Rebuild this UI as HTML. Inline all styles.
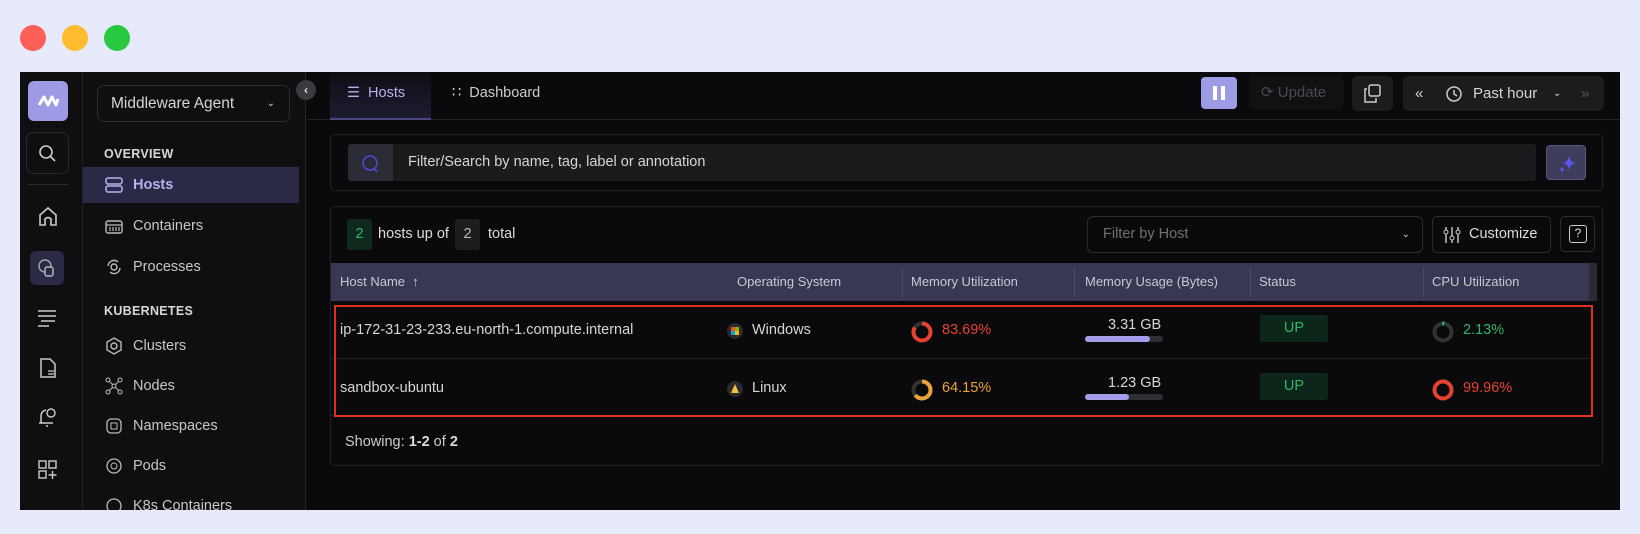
<!DOCTYPE html>
<html><head><meta charset="utf-8"><style>
*{box-sizing:border-box;margin:0;padding:0}
body{width:1640px;height:534px;background:#e6eafb;font-family:"Liberation Sans",sans-serif;position:relative;overflow:hidden;color:#ddd}
.a{position:absolute}
.dot{position:absolute;top:25px;width:26px;height:26px;border-radius:50%}
.app{position:absolute;left:20px;top:72px;width:1600px;height:438px;background:#0a0a0c;overflow:hidden}
.rail{left:0;top:0;width:63px;height:438px;background:#0f0f12;border-right:1px solid #222}
.side{left:63px;top:0;width:223px;height:438px;background:#0f0f11;border-right:1px solid #262628}
.sh{font-size:12.5px;font-weight:bold;color:#d8d8dc;letter-spacing:.3px}
.si{font-size:14.5px;color:#c8c8cc;display:flex;align-items:center;gap:10px}
.ic{width:18px;height:18px}
.cell{position:absolute;font-size:14.5px;color:#d6d6da}
.th{position:absolute;top:0;height:38px;line-height:38px;font-size:13px;color:#c8c8d4}
</style></head><body>
<div class="dot" style="left:20px;background:#fe5f57"></div>
<div class="dot" style="left:62px;background:#febc2e"></div>
<div class="dot" style="left:104px;background:#28c840"></div>
<div class="app">
 <div class="a rail">
  <div class="a" style="left:8px;top:9px;width:40px;height:40px;border-radius:6px;background:#9d9ae6"><svg width="40" height="40"><path d="M11 24 L16 16 L20 24 L24 16 L28 24 L30 18" stroke="#fff" stroke-width="3" fill="none" stroke-linejoin="round"/></svg></div>
  <div class="a" style="left:6px;top:60px;width:43px;height:42px;border:1px solid #2a2a2e;border-radius:7px"><svg width="42" height="40"><circle cx="19" cy="19" r="6" stroke="#ccc" stroke-width="1.6" fill="none"/><path d="M23.5 23.5 L28 28" stroke="#ccc" stroke-width="1.6"/></svg></div>
  <div class="a" style="left:8px;top:112px;width:40px;height:1px;background:#2a2a2e"></div>
  <svg class="a" style="left:15px;top:132px" width="26" height="26"><path d="M5 21 V11 L13 4 L21 11 V21 H16 V15 Q13 12 10 15 V21 Z" stroke="#ccc" stroke-width="1.6" fill="none"/></svg>
  <div class="a" style="left:10px;top:179px;width:34px;height:34px;border-radius:6px;background:#2a2946"></div>
  <svg class="a" style="left:15px;top:184px" width="24" height="24"><circle cx="10" cy="10" r="6" stroke="#aaa" stroke-width="1.4" fill="none"/><rect x="10" y="11" width="8" height="9" rx="2" stroke="#bbb" stroke-width="1.4" fill="#2a2946"/></svg>
  <svg class="a" style="left:15px;top:234px" width="24" height="24"><path d="M3 5H21M3 10H21M6 15H20M3 20H14" stroke="#ccc" stroke-width="1.5"/></svg>
  <svg class="a" style="left:16px;top:284px" width="24" height="24"><path d="M5 3H14L19 8V21H5Z" stroke="#ccc" stroke-width="1.5" fill="none"/><path d="M12 15H18M12 18H18" stroke="#ccc" stroke-width="1.3"/></svg>
  <svg class="a" style="left:15px;top:333px" width="24" height="24"><path d="M6 18V11Q6 6 11 5M4 18H18" stroke="#ccc" stroke-width="1.5" fill="none"/><circle cx="16" cy="8" r="4" stroke="#ccc" stroke-width="1.4" fill="none"/><path d="M11 21H13" stroke="#ccc" stroke-width="1.5"/></svg>
  <svg class="a" style="left:16px;top:386px" width="24" height="24"><rect x="3" y="3" width="7" height="7" stroke="#ccc" stroke-width="1.4" fill="none"/><rect x="13" y="3" width="7" height="7" stroke="#ccc" stroke-width="1.4" fill="none"/><rect x="3" y="13" width="7" height="7" stroke="#ccc" stroke-width="1.4" fill="none"/><path d="M16.5 13V21M12.5 17H20.5" stroke="#ccc" stroke-width="1.4"/></svg>
 </div>
 <div class="a side">
  <div class="a" style="left:14px;top:13px;width:193px;height:37px;border:1px solid #2c2c30;border-radius:7px;font-size:15.5px;color:#d6d6da;line-height:35px;padding-left:13px">Middleware Agent<span style="position:absolute;right:14px;font-size:10px">&#8964;</span></div>
  <div class="a sh" style="left:21px;top:75px">OVERVIEW</div>
  <div class="a" style="left:0;top:95px;width:216px;height:36px;background:#2a2946"></div>
  <div class="a si" style="left:22px;top:104px;color:#b7b2f0;font-weight:bold"><svg class="ic"><rect x="1" y="2" width="16" height="6" rx="2" stroke="#b7b2f0" stroke-width="1.5" fill="none"/><rect x="1" y="10" width="16" height="6" rx="2" stroke="#b7b2f0" stroke-width="1.5" fill="none"/></svg>Hosts</div>
  <div class="a si" style="left:22px;top:145px"><svg class="ic"><rect x="1" y="4" width="16" height="12" rx="2" stroke="#bbb" stroke-width="1.4" fill="none"/><path d="M1 8H17M5 10V14M8 10V14M11 10V14M14 10V14" stroke="#bbb" stroke-width="1.2"/></svg>Containers</div>
  <div class="a si" style="left:22px;top:186px"><svg class="ic"><circle cx="9" cy="9" r="3" stroke="#bbb" stroke-width="1.4" fill="none"/><path d="M3 8A6 6 0 0 1 13 4M15 10A6 6 0 0 1 5 14" stroke="#bbb" stroke-width="1.4" fill="none"/></svg>Processes</div>
  <div class="a sh" style="left:21px;top:232px">KUBERNETES</div>
  <div class="a si" style="left:22px;top:265px"><svg class="ic"><path d="M9 1L16 5V13L9 17L2 13V5Z" stroke="#bbb" stroke-width="1.4" fill="none"/><circle cx="9" cy="9" r="3" stroke="#bbb" stroke-width="1.4" fill="none"/></svg>Clusters</div>
  <div class="a si" style="left:22px;top:305px"><svg class="ic"><circle cx="3" cy="3" r="2" stroke="#bbb" fill="none"/><circle cx="15" cy="3" r="2" stroke="#bbb" fill="none"/><circle cx="3" cy="15" r="2" stroke="#bbb" fill="none"/><circle cx="15" cy="15" r="2" stroke="#bbb" fill="none"/><circle cx="9" cy="9" r="2" stroke="#bbb" fill="none"/><path d="M4 4L8 8M14 4L10 8M4 14L8 10M14 14L10 10" stroke="#bbb"/></svg>Nodes</div>
  <div class="a si" style="left:22px;top:345px"><svg class="ic"><rect x="2" y="2" width="14" height="14" rx="4" stroke="#bbb" stroke-width="1.3" fill="none"/><rect x="6" y="6" width="6" height="6" stroke="#bbb" fill="none"/></svg>Namespaces</div>
  <div class="a si" style="left:22px;top:385px"><svg class="ic"><circle cx="9" cy="9" r="7" stroke="#bbb" stroke-width="1.3" fill="none"/><circle cx="9" cy="9" r="3" stroke="#bbb" fill="none"/></svg>Pods</div>
  <div class="a si" style="left:22px;top:425px"><svg class="ic"><circle cx="9" cy="9" r="7" stroke="#bbb" stroke-width="1.3" fill="none"/></svg>K8s Containers</div>
 </div>
 <div class="a" style="left:276px;top:8px;width:20px;height:20px;border-radius:50%;background:#3a3a40;color:#ddd;font-size:12px;text-align:center;line-height:20px;font-weight:bold">&#8249;</div>
 <div class="a" style="left:287px;top:47px;width:1313px;height:1px;background:#232326"></div>
 <div class="a" style="left:310px;top:0;width:101px;height:48px;background:linear-gradient(#0e0e14,#1d1c30);border-bottom:2px solid #4a4780"></div>
 <div class="a" style="left:327px;top:13px;font-size:14.5px;color:#b7b2f0">&#9776;&nbsp; Hosts</div>
 <div class="a" style="left:432px;top:13px;font-size:14.5px;color:#ccc">&#8759;&nbsp; Dashboard</div>
 <div class="a" style="left:1181px;top:5px;width:36px;height:32px;border-radius:4px;background:#9d9ae6"><div class="a" style="left:12px;top:9px;width:4px;height:14px;background:#fff"></div><div class="a" style="left:20px;top:9px;width:4px;height:14px;background:#fff"></div></div>
 <div class="a" style="left:1229px;top:4px;width:95px;height:34px;border-radius:6px;background:#111114;font-size:15px;color:#4a4a50;line-height:34px;padding-left:12px">&#10227; Update</div>
 <div class="a" style="left:1332px;top:4px;width:41px;height:35px;border-radius:6px;background:#1c1c1f"><svg width="41" height="35"><rect x="17" y="9" width="11" height="11" rx="2" stroke="#ccc" stroke-width="1.5" fill="none"/><path d="M15 13H13V26H24V22" stroke="#ccc" stroke-width="1.5" fill="none"/></svg></div>
 <div class="a" style="left:1383px;top:4px;width:201px;height:35px;border-radius:6px;background:#1c1c1f;font-size:15px;color:#d6d6da;line-height:35px"><span class="a" style="left:12px">&#171;</span><svg class="a" style="left:42px;top:9px" width="18" height="18"><circle cx="9" cy="9" r="7" stroke="#ccc" stroke-width="1.5" fill="none"/><path d="M9 5V9L12 11" stroke="#ccc" stroke-width="1.5" fill="none"/></svg><span class="a" style="left:70px">Past hour</span><span class="a" style="left:150px;font-size:10px">&#8964;</span><span class="a" style="left:178px;color:#555">&#187;</span></div>
 <div class="a" style="left:310px;top:62px;width:1273px;height:57px;border:1px solid #232326;border-radius:5px"></div>
 <div class="a" style="left:328px;top:72px;width:1188px;height:37px;background:#1b1b1e;border-radius:3px"></div>
 <div class="a" style="left:328px;top:72px;width:45px;height:37px;background:#2c2c36;border-radius:3px 0 0 3px"><svg width="45" height="37"><circle cx="22" cy="19" r="7" stroke="#4e4ad8" stroke-width="1.5" fill="none"/><path d="M26 24L29 28" stroke="#4e4ad8" stroke-width="1.5"/></svg></div>
 <div class="a" style="left:388px;top:82px;font-size:14.5px;color:#d6d6da">Filter/Search by name, tag, label or annotation</div>
 <div class="a" style="left:1526px;top:73px;width:40px;height:35px;border-radius:4px;background:#3e3d5c;border:1px solid #5a5880"><svg width="40" height="35"><path d="M22 10Q23 16 28 17Q23 18 22 24Q21 18 16 17Q21 16 22 10Z" fill="#5a55f0"/><path d="M15 20Q15.5 23 18 23.5Q15.5 24 15 27Q14.5 24 12 23.5Q14.5 23 15 20Z" fill="#5a55f0"/></svg></div>
 <div class="a" style="left:310px;top:134px;width:1273px;height:260px;border:1px solid #232326;border-radius:5px;overflow:hidden">
  <div class="a" style="left:16px;top:12px;width:25px;height:31px;background:#0f2a1d;border-radius:3px;color:#2fb56b;font-size:14.5px;line-height:31px;text-align:center">2</div>
  <div class="a" style="left:47px;top:19px;font-size:14.5px;color:#ddd">hosts up of</div>
  <div class="a" style="left:124px;top:12px;width:25px;height:31px;background:#1d1d20;border-radius:3px;color:#bbb;font-size:14.5px;line-height:31px;text-align:center">2</div>
  <div class="a" style="left:157px;top:19px;font-size:14.5px;color:#ddd">total</div>
  <div class="a" style="left:756px;top:9px;width:336px;height:37px;border:1px solid #2c2c30;border-radius:6px;font-size:14.5px;color:#707076;line-height:35px;padding-left:15px">Filter by Host<span style="position:absolute;right:12px;color:#ccc;font-size:10px">&#8964;</span></div>
  <div class="a" style="left:1101px;top:9px;width:119px;height:37px;border:1px solid #2c2c30;border-radius:5px;font-size:14.5px;color:#ddd;line-height:35px;padding-left:36px"><svg class="a" style="left:10px;top:9px" width="18" height="18"><path d="M3 1V17M9 1V17M15 1V17" stroke="#ccc" stroke-width="1.4"/><circle cx="3" cy="6" r="2" fill="#0a0a0c" stroke="#ccc"/><circle cx="9" cy="12" r="2" fill="#0a0a0c" stroke="#ccc"/><circle cx="15" cy="6" r="2" fill="#0a0a0c" stroke="#ccc"/></svg>Customize</div>
  <div class="a" style="left:1229px;top:9px;width:35px;height:36px;border:1px solid #2c2c30;border-radius:5px"><div class="a" style="left:8px;top:8px;width:18px;height:18px;border:1.5px solid #ccc;border-radius:3px;font-size:12px;text-align:center;line-height:15px;color:#ddd">?</div></div>
  <div class="a" style="left:0;top:56px;width:1258px;height:38px;background:#393854">
   <div class="th" style="left:9px">Host Name &nbsp;&#8593;</div>
   <div class="th" style="left:406px">Operating System</div>
   <div class="th" style="left:580px">Memory Utilization</div>
   <div class="th" style="left:754px">Memory Usage (Bytes)</div>
   <div class="th" style="left:928px">Status</div>
   <div class="th" style="left:1101px">CPU Utilization</div>
   <div class="a" style="left:571px;top:4px;width:1px;height:30px;background:#4a4966"></div>
   <div class="a" style="left:743px;top:4px;width:1px;height:30px;background:#4a4966"></div>
   <div class="a" style="left:919px;top:4px;width:1px;height:30px;background:#4a4966"></div>
   <div class="a" style="left:1092px;top:4px;width:1px;height:30px;background:#4a4966"></div>
  </div>
  <div class="a" style="left:1258px;top:56px;width:8px;height:38px;background:#2a2a34"></div>
  <div class="a" style="left:0;top:151px;width:1258px;height:1px;background:#232326"></div>
  <div class="a" style="left:0;top:208px;width:1258px;height:1px;background:#232326"></div>
  <div class="cell" style="left:9px;top:115px">ip-172-31-23-233.eu-north-1.compute.internal</div>
  <div class="a" style="left:396px;top:116px;width:16px;height:16px;border-radius:50%;background:#2a2a2e"><div class="a" style="left:4px;top:4px;width:4px;height:4px;background:#f25022"></div><div class="a" style="left:8px;top:4px;width:4px;height:4px;background:#7fba00"></div><div class="a" style="left:4px;top:8px;width:4px;height:4px;background:#00a4ef"></div><div class="a" style="left:8px;top:8px;width:4px;height:4px;background:#ffb900"></div></div>
  <div class="cell" style="left:421px;top:115px">Windows</div>
  <svg class="a" style="left:579px;top:113px" width="24" height="24"><circle cx="12" cy="12" r="8.5" stroke="#333" stroke-width="4" fill="none"/><circle cx="12" cy="12" r="8.5" stroke="#e5432f" stroke-width="4" fill="none" stroke-dasharray="44.7 53.4" transform="rotate(-90 12 12)"/></svg>
  <div class="cell" style="left:611px;top:115px;color:#e5432f">83.69%</div>
  <div class="cell" style="left:777px;top:110px">3.31 GB</div>
  <div class="a" style="left:754px;top:129px;width:78px;height:6px;border-radius:3px;background:#2e2e33"><div style="width:65px;height:6px;border-radius:3px;background:#a19de8"></div></div>
  <div class="a" style="left:929px;top:108px;width:68px;height:27px;background:#0c2619;border-radius:2px;color:#2fb56b;font-size:14.5px;text-align:center;line-height:27px">UP</div>
  <svg class="a" style="left:1100px;top:113px" width="24" height="24"><circle cx="12" cy="12" r="8.5" stroke="#333" stroke-width="4" fill="none"/><circle cx="12" cy="12" r="8.5" stroke="#2fb56b" stroke-width="4" fill="none" stroke-dasharray="2 53.4" transform="rotate(-95 12 12)"/></svg>
  <div class="cell" style="left:1132px;top:115px;color:#2fb56b">2.13%</div>
  <div class="cell" style="left:9px;top:173px">sandbox-ubuntu</div>
  <div class="a" style="left:396px;top:174px;width:16px;height:16px;border-radius:50%;background:#2a2a2e"><div class="a" style="left:4px;top:3px;width:0;height:0;border-left:4px solid transparent;border-right:4px solid transparent;border-bottom:9px solid #f0c040"></div></div>
  <div class="cell" style="left:421px;top:173px">Linux</div>
  <svg class="a" style="left:579px;top:171px" width="24" height="24"><circle cx="12" cy="12" r="8.5" stroke="#333" stroke-width="4" fill="none"/><circle cx="12" cy="12" r="8.5" stroke="#e8a33a" stroke-width="4" fill="none" stroke-dasharray="34.3 53.4" transform="rotate(-90 12 12)"/></svg>
  <div class="cell" style="left:611px;top:173px;color:#e8a33a">64.15%</div>
  <div class="cell" style="left:777px;top:168px">1.23 GB</div>
  <div class="a" style="left:754px;top:187px;width:78px;height:6px;border-radius:3px;background:#2e2e33"><div style="width:44px;height:6px;border-radius:3px;background:#a19de8"></div></div>
  <div class="a" style="left:929px;top:166px;width:68px;height:27px;background:#0c2619;border-radius:2px;color:#2fb56b;font-size:14.5px;text-align:center;line-height:27px">UP</div>
  <svg class="a" style="left:1100px;top:171px" width="24" height="24"><circle cx="12" cy="12" r="8.5" stroke="#e5432f" stroke-width="4" fill="none"/></svg>
  <div class="cell" style="left:1132px;top:173px;color:#e5432f">99.96%</div>
  <div class="a" style="left:3px;top:98px;width:1259px;height:112px;border:2.5px solid #e0301e"></div>
  <div class="cell" style="left:14px;top:227px;color:#ccc">Showing: <b style="color:#ddd">1-2</b> of <b style="color:#ddd">2</b></div>
 </div>
</div>
</body></html>
